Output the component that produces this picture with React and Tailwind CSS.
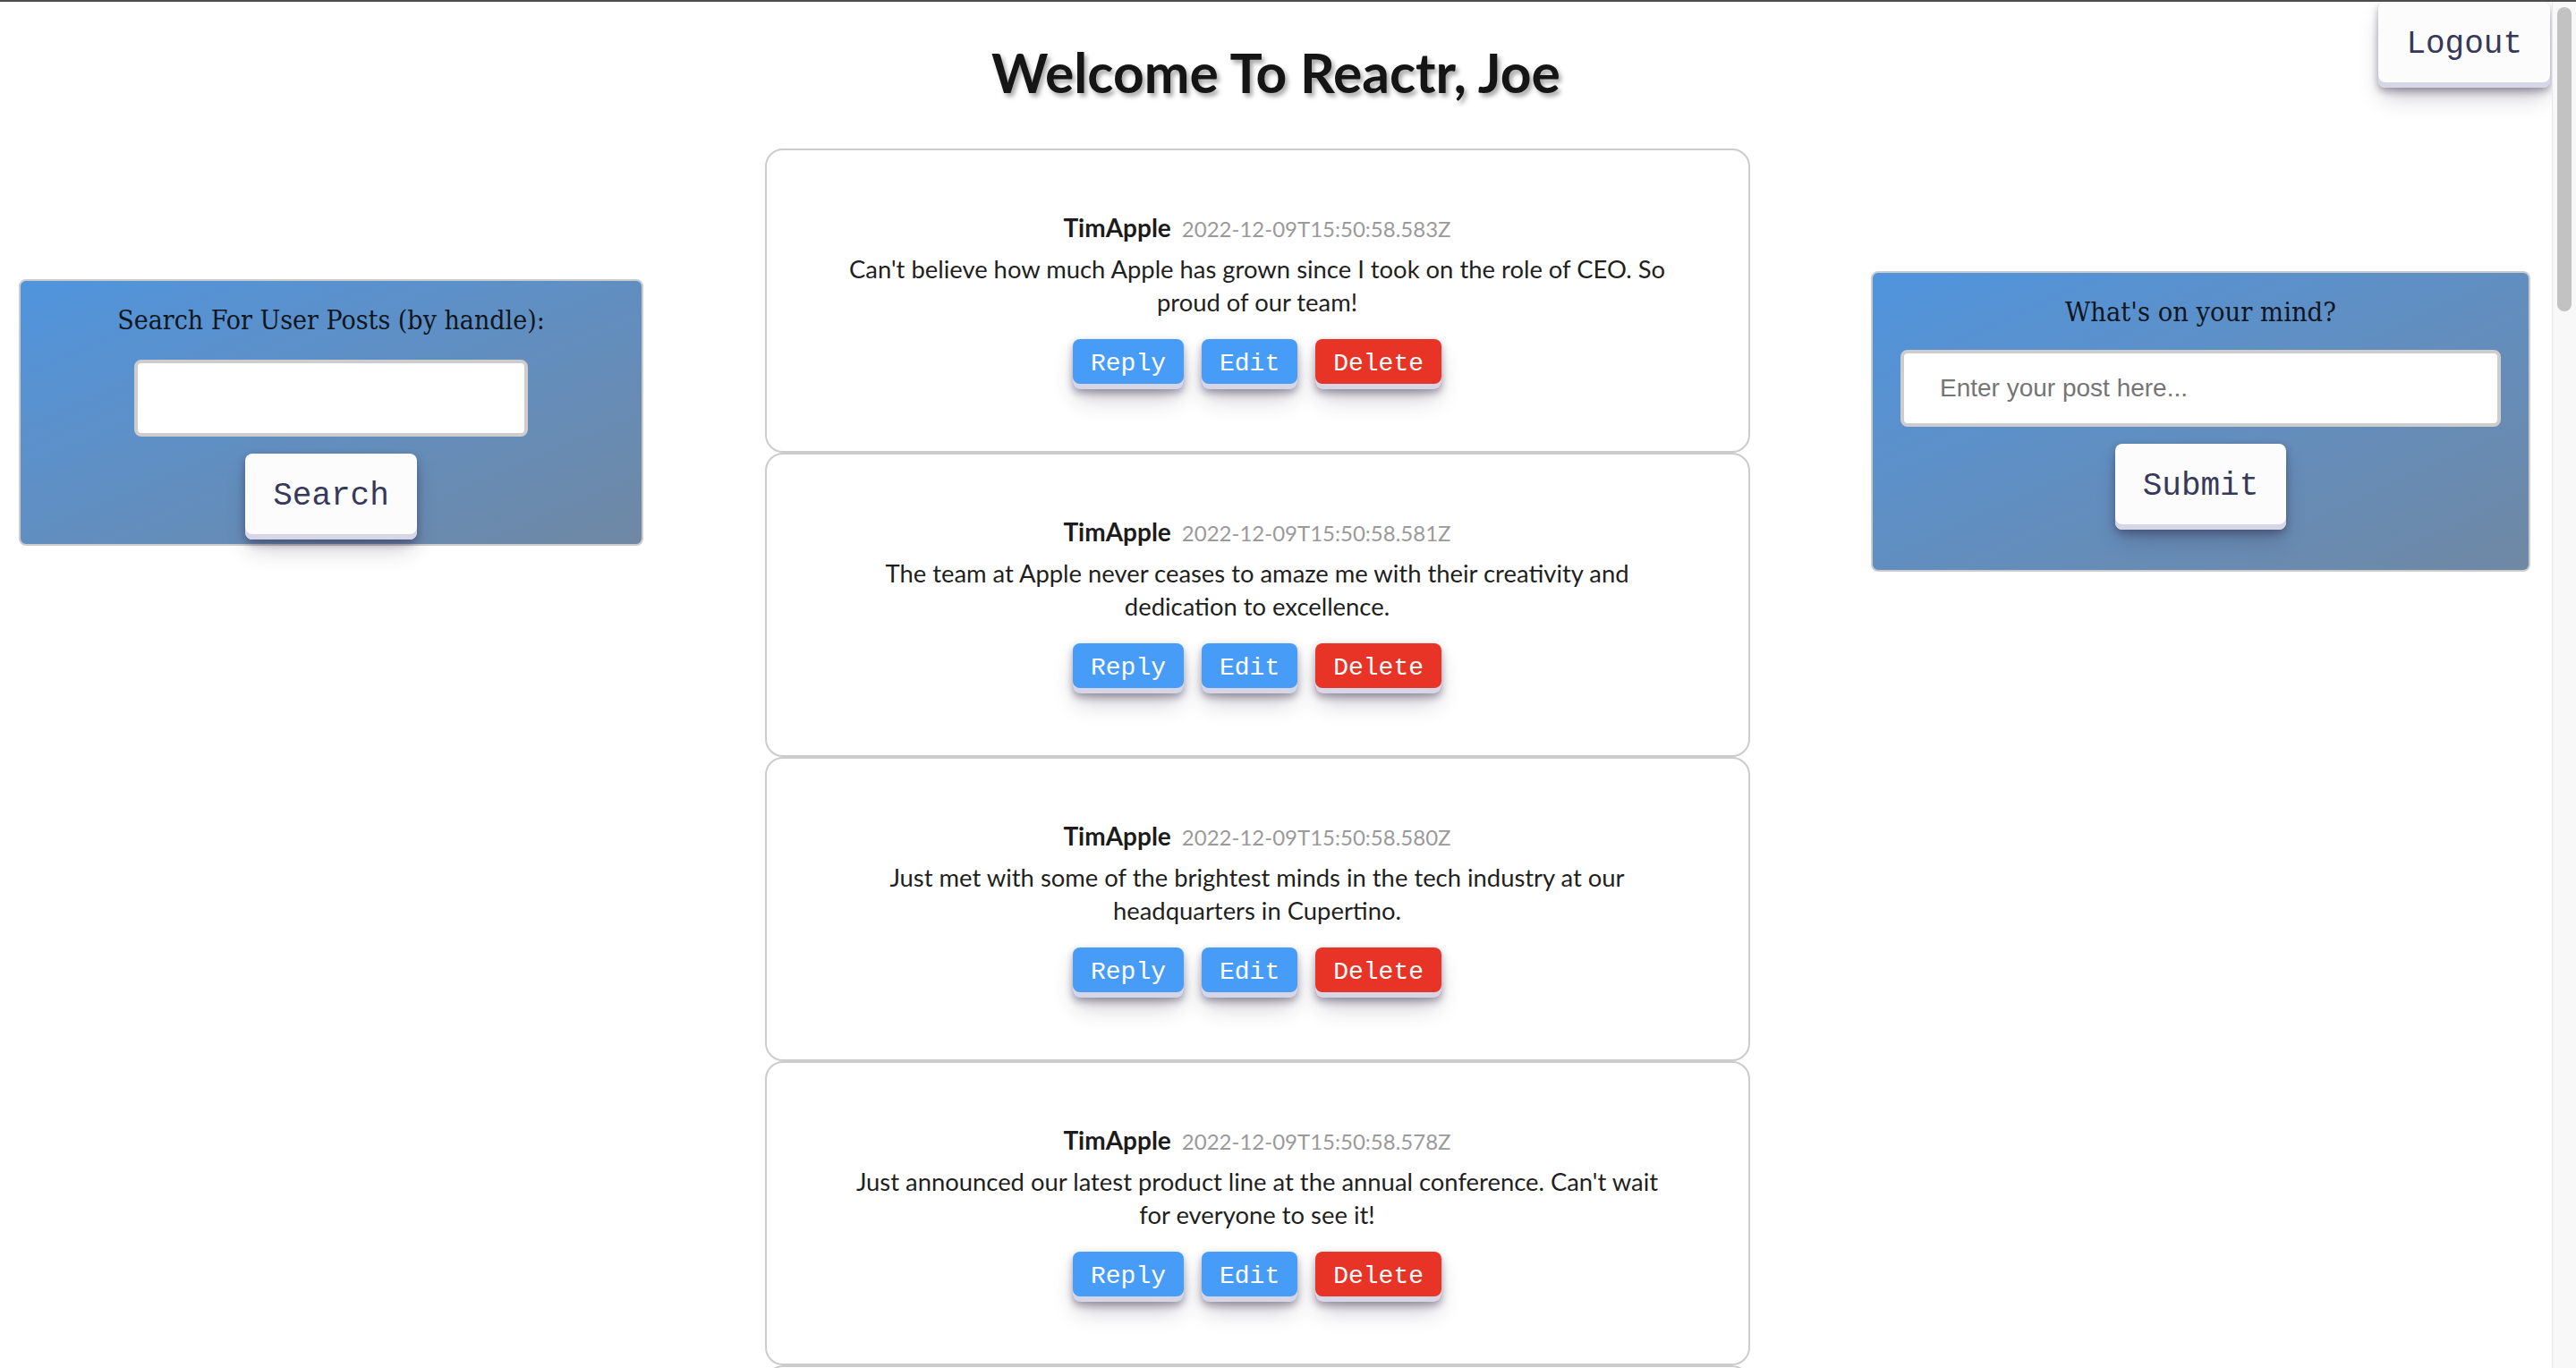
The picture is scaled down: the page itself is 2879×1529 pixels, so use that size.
const posts = [
  {
    handle: 'TimApple',
    time: '2022-12-09T15:50:58.583Z',
    text: "Can't believe how much Apple has grown since I took on the role of CEO. So proud of our team!",
  },
  {
    handle: 'TimApple',
    time: '2022-12-09T15:50:58.581Z',
    text: 'The team at Apple never ceases to amaze me with their creativity and dedication to excellence.',
  },
  {
    handle: 'TimApple',
    time: '2022-12-09T15:50:58.580Z',
    text: 'Just met with some of the brightest minds in the tech industry at our headquarters in Cupertino.',
  },
  {
    handle: 'TimApple',
    time: '2022-12-09T15:50:58.578Z',
    text: "Just announced our latest product line at the annual conference. Can't wait for everyone to see it!",
  },
  {
    handle: 'TimApple',
    time: '2022-12-09T15:50:58.575Z',
    text: 'Excited to see what the future holds for Apple and our customers.',
  },
];

const btnShadow =
  'shadow-[0_4px_8px_rgba(45,35,66,0.4),0_14px_26px_-6px_rgba(45,35,66,0.3),inset_0_-6px_0_#d6d6e7]';

const BigButton = ({ children }) => (
  <button
    type="button"
    className={`h-[96px] px-[31px] rounded-[8px] bg-[#fcfcfd] text-[#36395a] text-[36px] font-['Liberation_Mono',monospace] ${btnShadow}`}
  >
    {children}
  </button>
);

const PostCard = ({ post }) => (
  <div className="h-[340px] shrink-0 border-2 border-[#cccccc] rounded-[20px] bg-white flex flex-col items-center justify-center px-[70px] font-['Lato',sans-serif]">
    <div className="flex items-baseline gap-[12px] leading-[34px]">
      <span className="text-[28px] font-bold text-[#1c1c1c]">{post.handle}</span>
      <span className="text-[24px] text-[#9a9a9a]">{post.time}</span>
    </div>
    <p className="mt-[9px] max-w-[935px] text-center text-[27.4px] leading-[37px] text-[#1f1f1f]">{post.text}</p>
    <div className="mt-[23px] flex gap-[20px] font-['Liberation_Mono',monospace] text-[28px] text-white">
      <button type="button" className={`h-[56px] px-[20px] rounded-[8px] bg-[#479cf8] ${btnShadow}`}>Reply</button>
      <button type="button" className={`h-[56px] px-[20px] rounded-[8px] bg-[#479cf8] ${btnShadow}`}>Edit</button>
      <button type="button" className={`h-[56px] px-[20px] rounded-[8px] bg-[#e83426] ${btnShadow}`}>Delete</button>
    </div>
  </div>
);

export default function App() {
  return (
    <div className="h-screen w-full overflow-hidden flex flex-col bg-white">
      <div className="h-[2px] shrink-0 bg-[#4d4d4d]" />
      <div className="flex flex-1 min-h-0">
        <main className="relative flex-1 min-w-0 overflow-hidden">
          <div className="absolute top-0 right-[2px]">
            <BigButton>Logout</BigButton>
          </div>

          <h1 className="pt-[41px] text-center font-['Lato',sans-serif] font-bold text-[60.5px] leading-[76px] text-[#151515] [text-shadow:3px_4px_5px_rgba(0,0,0,0.35)]">
            Welcome To Reactr, Joe
          </h1>

          <div className="mt-[47px] flex justify-between items-start pl-[21px] pr-[24px]">
            <section className="mt-[146px] w-[698px] h-[298px] border-2 border-[#cccccc] rounded-[8px] bg-linear-to-br from-[#4f94dd] to-[#6f88a4] flex flex-col items-center pt-[26px]">
              <label className="font-['DejaVu_Serif',serif] font-stretch-condensed text-[30px] leading-[36px] text-[#10161e]">
                Search For User Posts (by handle):
              </label>
              <input
                type="text"
                className="mt-[26px] w-[440px] h-[86px] bg-white border-4 border-[#cdcdcd] rounded-[8px] outline-none"
              />
              <div className="mt-[19px]">
                <BigButton>Search</BigButton>
              </div>
            </section>

            <div className="w-[1101px] flex flex-col">
              {posts.map((post) => (
                <PostCard key={post.time} post={post} />
              ))}
            </div>

            <section className="mt-[137px] w-[737px] h-[336px] border-2 border-[#cccccc] rounded-[8px] bg-linear-to-br from-[#4f94dd] to-[#6f88a4] flex flex-col items-center pt-[26px] px-[31px]">
              <label className="font-['DejaVu_Serif',serif] font-stretch-condensed text-[30.5px] leading-[36px] text-[#10161e]">
                What's on your mind?
              </label>
              <input
                type="text"
                placeholder="Enter your post here..."
                className="mt-[24px] w-full h-[86px] bg-white border-4 border-[#cdcdcd] rounded-[8px] pl-[40px] outline-none font-['Liberation_Sans',sans-serif] text-[28px] text-[#333] placeholder:text-[#757575]"
              />
              <div className="mt-[19px]">
                <BigButton>Submit</BigButton>
              </div>
            </section>
          </div>
        </main>

        <div className="w-[27px] shrink-0 bg-[#f8f8f8] border-l border-[#e6e6e6] flex justify-center">
          <div className="mt-[6px] w-[16px] h-[340px] rounded-full bg-[#c2c2c2]" />
        </div>
      </div>
    </div>
  );
}
